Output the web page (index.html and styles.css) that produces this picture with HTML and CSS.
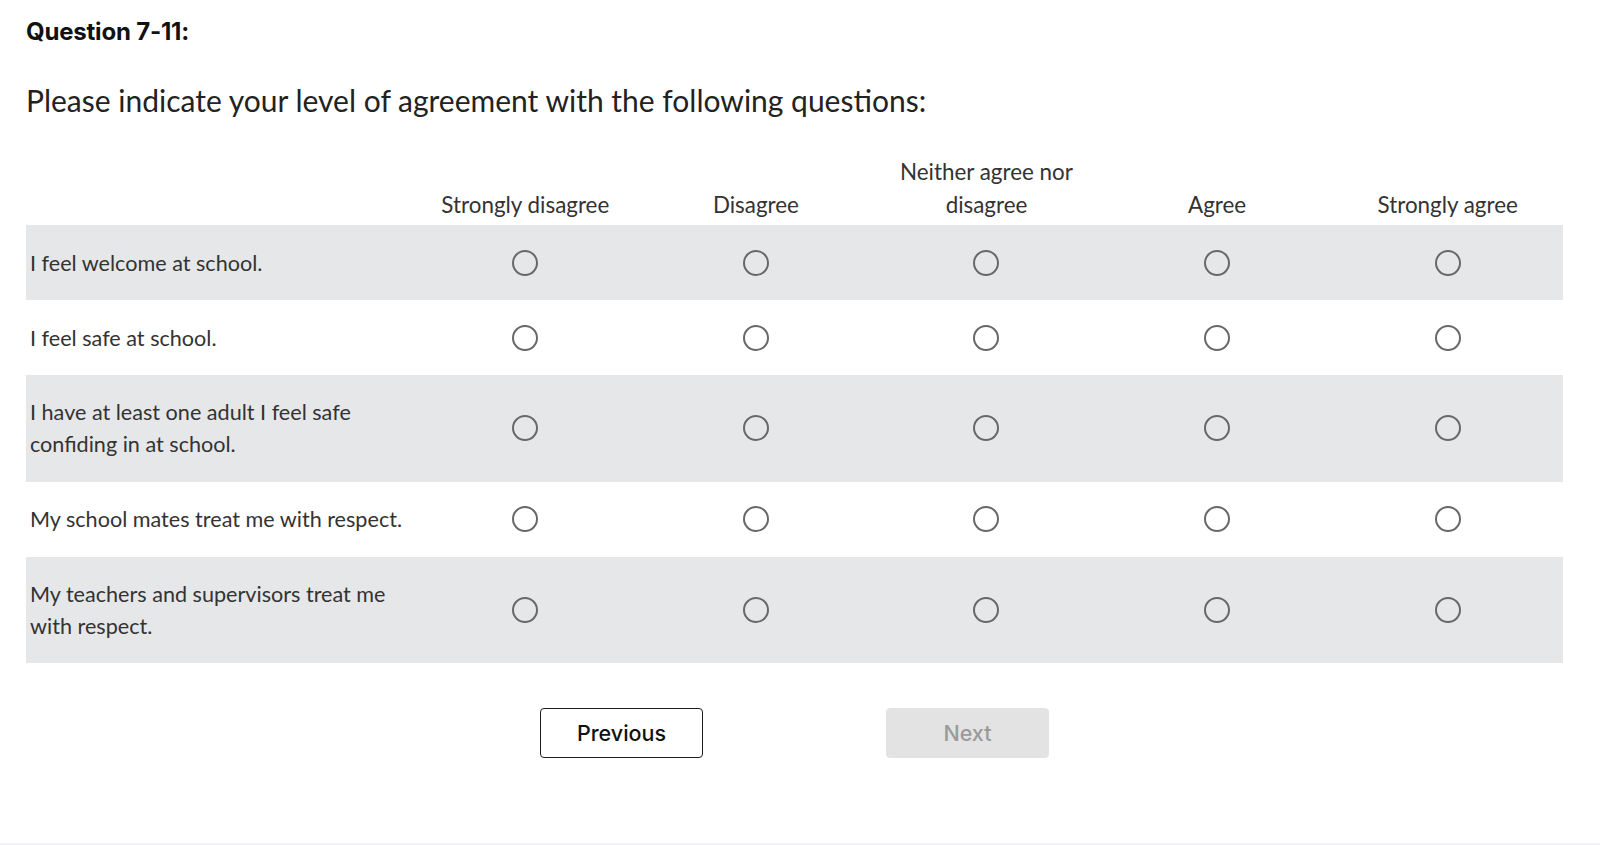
FILE: index.html
```html
<!DOCTYPE html>
<html>
<head>
<meta charset="utf-8">
<link rel="stylesheet" href="styles.css">
</head>
<body>
<div class="page">
  <h2 class="qnum">Question 7-11:</h2>
  <p class="prompt">Please indicate your level of agreement with the following questions:</p>
  <table class="matrix">
    <colgroup>
      <col class="c-label"><col class="c-opt"><col class="c-opt"><col class="c-opt"><col class="c-opt"><col class="c-opt">
    </colgroup>
    <thead>
      <tr>
        <th></th>
        <th>Strongly disagree</th>
        <th>Disagree</th>
        <th>Neither agree nor<br>disagree</th>
        <th>Agree</th>
        <th>Strongly agree</th>
      </tr>
    </thead>
    <tbody>
      <tr class="alt r1">
        <td class="label">I feel welcome at school.</td>
        <td><span class="radio"></span></td><td><span class="radio"></span></td><td><span class="radio"></span></td><td><span class="radio"></span></td><td><span class="radio"></span></td>
      </tr>
      <tr class="r1">
        <td class="label">I feel safe at school.</td>
        <td><span class="radio"></span></td><td><span class="radio"></span></td><td><span class="radio"></span></td><td><span class="radio"></span></td><td><span class="radio"></span></td>
      </tr>
      <tr class="alt r2">
        <td class="label">I have at least one adult I feel safe confiding in at school.</td>
        <td><span class="radio"></span></td><td><span class="radio"></span></td><td><span class="radio"></span></td><td><span class="radio"></span></td><td><span class="radio"></span></td>
      </tr>
      <tr class="r1">
        <td class="label">My school mates treat me with respect.</td>
        <td><span class="radio"></span></td><td><span class="radio"></span></td><td><span class="radio"></span></td><td><span class="radio"></span></td><td><span class="radio"></span></td>
      </tr>
      <tr class="alt r2">
        <td class="label">My teachers and supervisors treat me with respect.</td>
        <td><span class="radio"></span></td><td><span class="radio"></span></td><td><span class="radio"></span></td><td><span class="radio"></span></td><td><span class="radio"></span></td>
      </tr>
    </tbody>
  </table>
  <div class="nav">
    <button class="btn prev">Previous</button>
    <button class="btn next" disabled>Next</button>
  </div>
</div>
<div class="footer-line"></div>
</body>
</html>
```
FILE: styles.css
```css
html, body {
  margin: 0;
  padding: 0;
  background: #fff;
}
body {
  font-family: Lato, "Liberation Sans", sans-serif;
  color: #333;
  height: 845px;
  position: relative;
}
.page {
  width: 1537px;
  padding: 17px 0 0 26px;
}
.qnum {
  margin: 0;
  font-family: Inter, "Liberation Sans", sans-serif;
  font-weight: 700;
  font-size: 24px;
  line-height: 30px;
  color: #111;
  letter-spacing: -0.2px;
}
.prompt {
  margin: 33px 0 0 0;
  font-size: 30px;
  line-height: 40px;
  color: #222;
}
.matrix {
  margin-top: 35px;
  width: 1537px;
  border-collapse: collapse;
  table-layout: fixed;
}
.c-label { width: 384px; }
.c-opt { width: 230.6px; }
.matrix th {
  font-weight: 400;
  font-size: 22.4px;
  line-height: 33px;
  padding: 0 0 4px 0;
  vertical-align: bottom;
  text-align: center;
  color: #333;
}
.matrix td {
  padding: 0;
  text-align: center;
  vertical-align: middle;
}
.matrix td.label {
  text-align: left;
  padding: 0 2px 0 4px;
  font-size: 21.6px;
  line-height: 32px;
  color: #333;
}
.r1 { height: 75px; }
.r2 { height: 106.5px; }
.alt { background: #e6e7e9; }
.radio {
  display: inline-block;
  width: 22px;
  height: 22px;
  border: 2.6px solid #686868;
  border-radius: 50%;
  vertical-align: middle;
}
.nav {
  display: flex;
  justify-content: center;
  gap: 183px;
  margin-top: 45px;
}
.btn {
  width: 163px;
  height: 50px;
  font-family: Inter, "Liberation Sans", sans-serif;
  font-size: 21.5px;
  font-weight: 500;
  border-radius: 4px;
}
.prev {
  background: #fff;
  border: 1px solid #1b1b22;
  color: #111;
}
.next {
  background: #e3e3e3;
  border: 1px solid #e3e3e3;
  color: #9a9a9a;
}
.footer-line {
  position: absolute;
  left: 0;
  right: 0;
  bottom: 0;
  height: 2px;
  background: #f1f1f3;
}
```
